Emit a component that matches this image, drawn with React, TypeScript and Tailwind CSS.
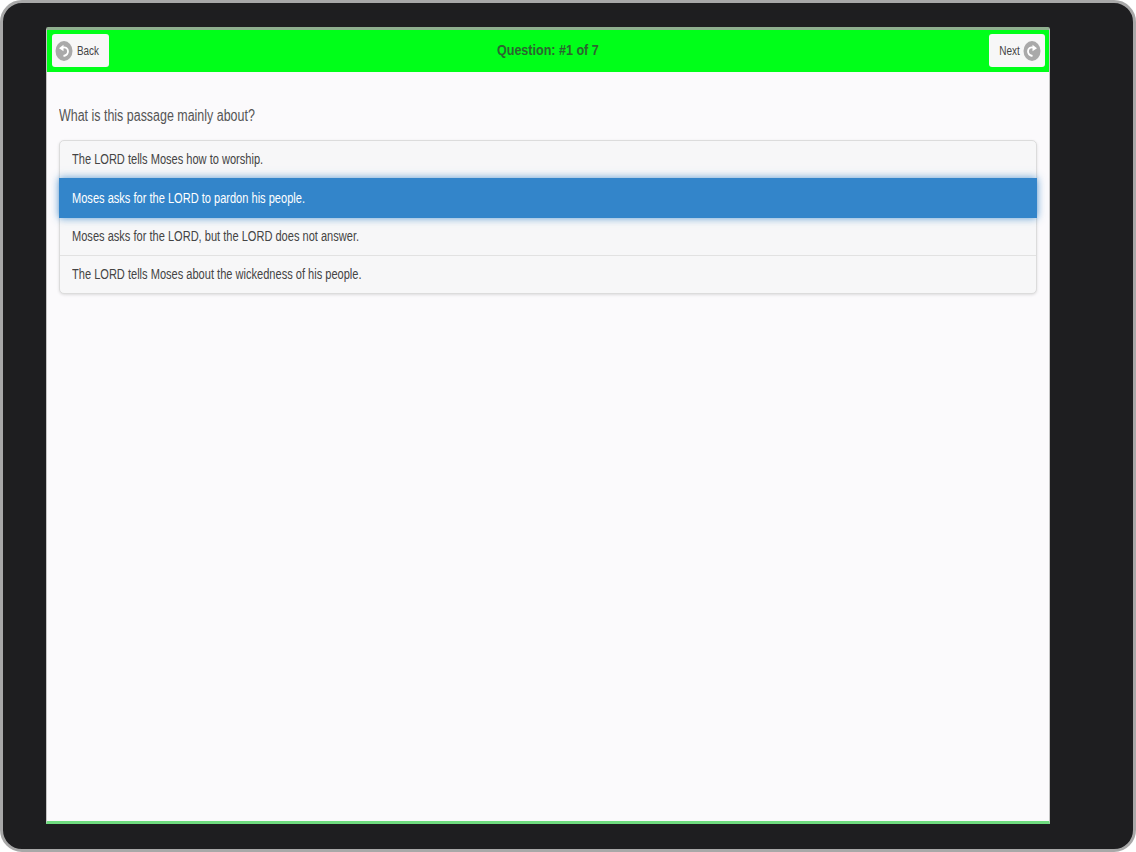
const font = { fontFamily: '"Liberation Sans", Arial, sans-serif' };

const answers = [
  { text: "The LORD tells Moses how to worship.", active: false },
  { text: "Moses asks for the LORD to pardon his people.", active: true },
  { text: "Moses asks for the LORD, but the LORD does not answer.", active: false },
  { text: "The LORD tells Moses about the wickedness of his people.", active: false },
];

function BackIcon() {
  return (
    <svg width="18" height="22" viewBox="0 0 18 22" className="shrink-0">
      <ellipse cx="9" cy="11" rx="8.500" ry="10" fill="#a9a9a9" />
      <path d="M7.500 7.600c3-1 5.500.8 5.500 3.600 0 2.400-1.800 4.200-4.500 4.800" fill="none" stroke="#fff" strokeWidth="1.800" />
      <path d="M4 8.200l4.500-3.400v6.400z" fill="#fff" />
    </svg>
  );
}

function NextIcon() {
  return (
    <svg width="18" height="22" viewBox="0 0 18 22" className="shrink-0">
      <ellipse cx="9" cy="11" rx="8.500" ry="10" fill="#a9a9a9" />
      <path d="M10.500 7.600c-3-1-5.500.8-5.500 3.600 0 2.400 1.800 4.200 4.500 4.800" fill="none" stroke="#fff" strokeWidth="1.800" />
      <path d="M14 8.200L9.500 4.800v6.400z" fill="#fff" />
    </svg>
  );
}

export default function App() {
  return (
    <div
      className="w-[1136px] h-[852px] overflow-hidden bg-[#1e1e20] border-[3px] border-[#a8a8a8] rounded-[22px] pt-[24px] pl-[43px] pb-[25px] pr-[83px]"
      style={font}
    >
      <div className="h-[797px] w-[1004px] flex flex-col bg-[#fbfafc] border-t-[3px] border-t-[#8fb08f] border-b-[3px] border-b-[#6fdc7f] border-x border-x-[#c4c4c4] rounded-t-[2px]">
        <div className="h-[42px] shrink-0 bg-[#00ff19] flex items-center justify-between pl-[5px] pr-[4px] pb-px">
          <div className="w-[57px] h-[33px] bg-[#f7f7f7] rounded-[3px] flex items-center gap-[4px] pl-[3px]">
            <BackIcon />
            <span className="inline-block text-[13px] text-[#444] origin-left scale-x-[0.76]">Back</span>
          </div>
          <span className="inline-block mr-[2px] text-[15px] font-bold text-[#2c6430] origin-center scale-x-[0.836]">Question: #1 of 7</span>
          <div className="w-[56px] h-[33px] bg-[#f7f7f7] rounded-[3px] flex items-center justify-end gap-[3px] pr-[4px]">
            <span className="inline-block text-[13px] text-[#444] origin-right scale-x-[0.77]">Next</span>
            <NextIcon />
          </div>
        </div>
        <div className="pt-[33px] px-[12px]">
          <p className="text-[16px] leading-[22px] text-[#555] origin-left scale-x-[0.778]">What is this passage mainly about?</p>
          <ul className="mt-[13px] w-[978px] border border-[#dcdcdc] rounded-[5px] bg-[#f7f7f8] shadow-[0_1px_3px_rgba(0,0,0,0.12)]">
            {answers.map((a, i) =>
              a.active ? (
                <li
                  key={i}
                  className="h-[40px] -mx-px flex items-center pl-[13px] bg-[#3385ca] text-white text-[14px] shadow-[0_0_8px_rgba(51,133,202,0.8)] relative"
                >
                  <span className="inline-block origin-left scale-x-[0.79]">{a.text}</span>
                </li>
              ) : (
                <li
                  key={i}
                  className={
                    i === 3
                      ? "h-[38px] flex items-center pl-[12px] text-[14px] text-[#444] border-t border-[#e2e2e2]"
                      : "h-[37px] flex items-center pl-[12px] text-[14px] text-[#444]"
                  }
                >
                  <span className="inline-block origin-left scale-x-[0.79]">{a.text}</span>
                </li>
              )
            )}
          </ul>
        </div>
      </div>
    </div>
  );
}
